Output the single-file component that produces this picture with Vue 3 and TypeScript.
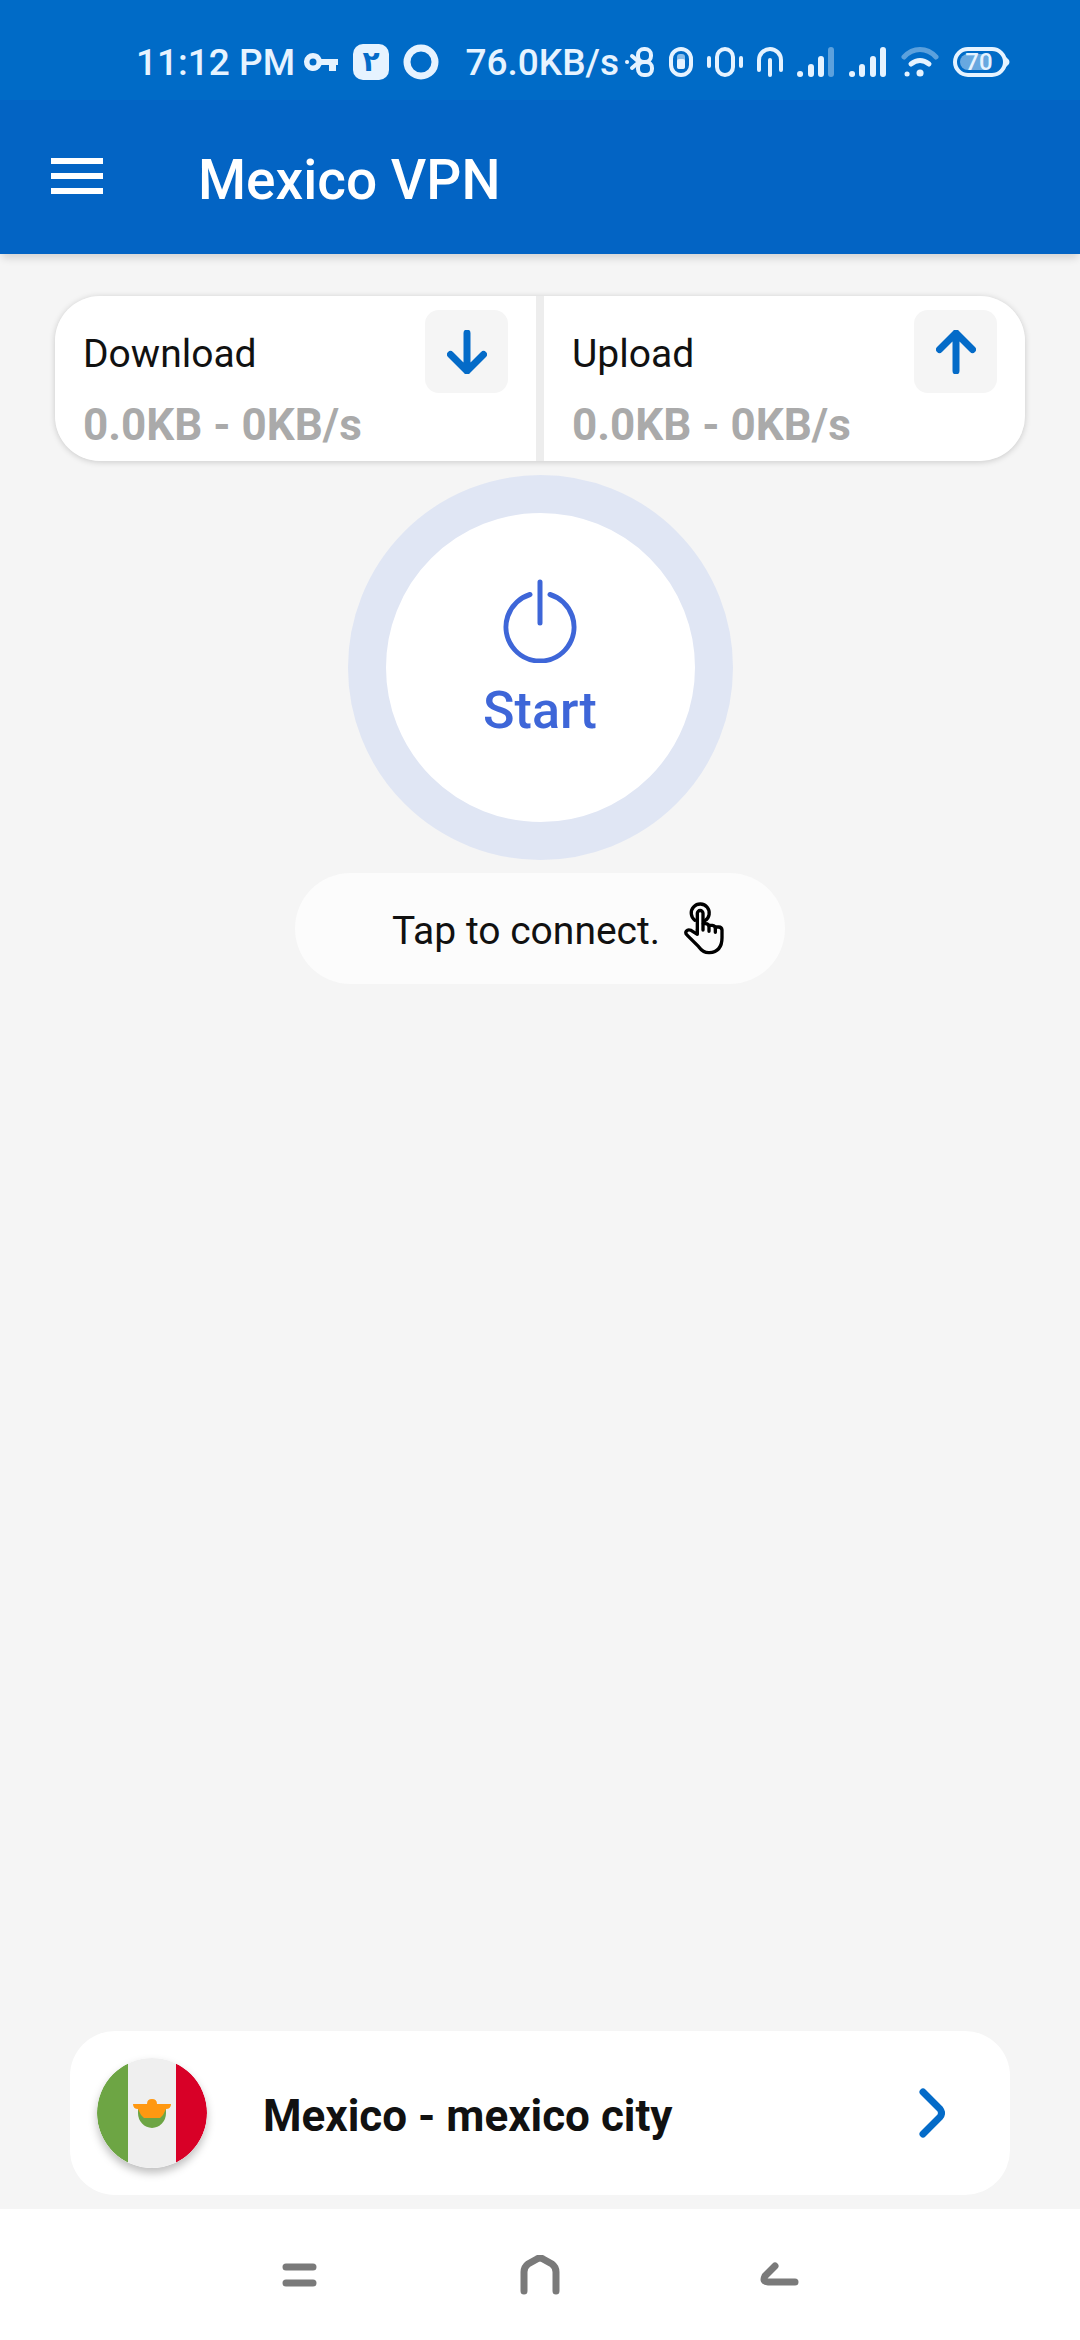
<script setup lang="ts">
import { ref } from 'vue'

interface Traffic {
  label: string
  value: string
  arrow: string
}

const traffic = ref<Traffic[]>([
  { label: 'Download', value: '0.0KB - 0KB/s', arrow: 'M20 3V41M3.5 24.5L20 41L36.5 24.5' },
  { label: 'Upload', value: '0.0KB - 0KB/s', arrow: 'M20 41V3M3.5 19.5L20 3L36.5 19.5' },
])

const location = ref('Mexico - mexico city')
</script>

<template>
  <div class="screen">
    <div class="status">
      <span class="status-text clock">11:12 PM</span>
      <svg width="35" height="20" viewBox="0 0 35 20" fill="currentColor">
        <path fill-rule="evenodd" d="M9 1a9 9 0 0 1 8.500 6H34v6h-2v6h-7v-6h-7.500A9 9 0 1 1 9 1zM9 6.500a3.500 3.500 0 1 0 0 7a3.500 3.500 0 1 0 0-7z" />
      </svg>
      <span class="badge">٢</span>
      <svg width="36" height="36" viewBox="0 0 36 36" fill="none" stroke="currentColor" stroke-width="7">
        <circle cx="18" cy="18" r="14" />
      </svg>
      <span class="status-text speed">76.0KB/s</span>
      <svg width="30" height="32" viewBox="0 0 30 32" fill="none" stroke="currentColor" stroke-width="4" stroke-linecap="round">
        <path d="M7 10L14 16M7 22L14 16" />
        <rect x="13" y="3" width="13" height="13" rx="6" />
        <rect x="13" y="16" width="14" height="13" rx="6" />
        <path d="M2 16h.1" />
      </svg>
      <svg width="24" height="32" viewBox="0 0 24 32" fill="none">
        <rect x="2" y="3" width="20" height="26" rx="10" stroke="currentColor" stroke-width="4" />
        <rect x="8" y="8" width="8" height="15" rx="3" fill="currentColor" opacity=".6" />
        <rect x="8" y="13" width="8" height="10" rx="2" fill="currentColor" />
      </svg>
      <svg width="36" height="32" viewBox="0 0 36 32" fill="none" stroke="currentColor" stroke-width="4" stroke-linecap="round">
        <rect x="10" y="3" width="16" height="26" rx="8" />
        <path d="M2 12v8M34 12v8" />
      </svg>
      <svg width="26" height="32" viewBox="0 0 26 32" fill="none" stroke="currentColor" stroke-width="4" stroke-linecap="round">
        <path d="M2 24V14a11 11 0 0 1 22 0v10M13 14v15" />
      </svg>
      <svg width="38" height="32" viewBox="0 0 38 32" fill="none" stroke="currentColor" stroke-width="6" stroke-linecap="round">
        <path d="M3 28h.1M14 21v7M24 13v15" />
        <path d="M34 4v24" opacity=".4" />
      </svg>
      <svg width="38" height="32" viewBox="0 0 38 32" fill="none" stroke="currentColor" stroke-width="6" stroke-linecap="round">
        <path d="M3 28h.1M13 21v7M24 13v15M34 4v24" />
      </svg>
      <svg width="38" height="32" viewBox="0 0 38 32" fill="none" stroke="currentColor" stroke-width="5" stroke-linecap="round">
        <path d="M3 11C12 1 26 1 35 11" opacity=".4" />
        <path d="M10 18q9-7 18 0" />
        <path d="M19 27h.1" stroke-width="7" />
        <path d="M6 28h.1" />
      </svg>
      <span class="battery">
        <svg width="57" height="32" viewBox="0 0 57 32" fill="none">
          <rect x="2" y="3" width="50" height="26" rx="13" stroke="currentColor" stroke-width="4" />
          <rect x="7" y="8" width="30" height="16" rx="8" fill="currentColor" opacity=".45" />
          <path d="M53 11l3 3q1 2 0 4l-3 3z" fill="currentColor" />
        </svg>
        <span class="level">70</span>
      </span>
    </div>

    <header class="bar">
      <button class="menu" type="button" aria-label="Menu">
        <svg width="52" height="36" viewBox="0 0 52 36" stroke="#fff" stroke-width="6">
          <path d="M0 3h52M0 18h52M0 33h52" />
        </svg>
      </button>
      <h1>Mexico VPN</h1>
    </header>

    <main>
      <section class="stats">
        <div v-for="item in traffic" :key="item.label" class="stat">
          <div class="stat-head">
            <span class="stat-label">{{ item.label }}</span>
            <span class="stat-icon">
              <svg width="40" height="44" viewBox="0 0 40 44" fill="none" stroke="#046bc8" stroke-width="7" stroke-linecap="round" stroke-linejoin="round">
                <path :d="item.arrow" />
              </svg>
            </span>
          </div>
          <div class="stat-value">{{ item.value }}</div>
        </div>
      </section>

      <button class="power" type="button">
        <svg width="74" height="84" viewBox="0 0 74 84" fill="none" stroke="#3e66d8" stroke-width="5" stroke-linecap="round">
          <path d="M37 3v41M27 15.500A34 34 0 1 0 47 15.500" />
        </svg>
        <span>Start</span>
      </button>

      <p class="hint">
        <span>Tap to connect.</span>
        <svg width="40" height="53" viewBox="36 36 120 159" fill="none" stroke="#000" stroke-width="10" stroke-linecap="round" stroke-linejoin="round">
          <path d="M69 91A27 27 0 1 1 99 92" />
          <path d="M76 120V70a8 8 0 0 1 17 0V120" />
          <path d="M76 120V133L57 121C45 116 36 127 46 136L80 170Q94 189 112 188C138 186 150 169 150 143V120Q149 110 138 111H131" />
          <path d="M94 101h6q11 0 11 10v13M112 106h9q9 1 9 10v11" />
        </svg>
      </p>

      <button class="location" type="button">
        <svg class="flag" width="110" height="110" viewBox="0 0 110 110">
          <defs>
            <clipPath id="disc"><circle cx="55" cy="55" r="55" /></clipPath>
          </defs>
          <g clip-path="url(#disc)">
            <path d="M0 0h110v110H0z" fill="#efefef" />
            <path d="M0 0h31v110H0z" fill="#6da544" />
            <path d="M79 0h31v110H79z" fill="#d80027" />
            <path d="M41 50h28v5a14 15 0 0 1-28 0z" fill="#6da544" />
            <path d="M36 46h14q0-5 5-5t5 5h14q0 5-5 5l-3 6-3 3H47l-3-3-3-6q-5 0-5-5z" fill="#ff9811" />
          </g>
        </svg>
        <span class="place">{{ location }}</span>
        <svg width="26" height="50" viewBox="0 0 26 50" fill="none" stroke="#046bc8" stroke-width="7" stroke-linecap="round">
          <path d="M4 4L21 21Q24 25 21 29L4 46" />
        </svg>
      </button>
    </main>

    <nav class="nav">
      <button type="button" aria-label="Recent apps">
        <svg width="40" height="40" viewBox="0 0 40 40">
          <path d="M6 12h27M6 28h27" />
        </svg>
      </button>
      <button type="button" aria-label="Home">
        <svg width="40" height="40" viewBox="0 0 40 40">
          <path d="M4 36V17Q4 12 8 9L17 4Q20 2 23 4L32 9Q36 12 36 17V36" />
        </svg>
      </button>
      <button type="button" aria-label="Back">
        <svg width="40" height="40" viewBox="0 0 40 40">
          <path d="M15 11L5 21Q2 27 8 27H35" />
        </svg>
      </button>
    </nav>
  </div>
</template>

<style>
body {
  background: #f5f5f5;
}
</style>

<style scoped>
* {
  box-sizing: border-box;
}

.screen {
  display: flex;
  flex-direction: column;
  min-height: 100vh;
  font-family: Roboto, "Noto Sans", sans-serif;
  color: #111;
  background: #f5f5f5;
}

svg {
  display: block;
  flex: none;
}

button {
  border: 0;
  padding: 0;
  background: none;
  font: inherit;
  color: inherit;
}

.status {
  display: flex;
  align-items: center;
  gap: 14px;
  height: 100px;
  padding: 24px 70px 0 136px;
  background: #006bc7;
  color: #e6f3ff;
}

.status-text {
  padding-top: 2px;
  font-size: 37px;
  font-weight: 500;
  line-height: 44px;
  white-space: nowrap;
}

.clock {
  flex: none;
  margin-right: -5px;
}

.speed {
  margin-left: auto;
  margin-right: -8px;
}

.badge {
  display: flex;
  flex: none;
  align-items: center;
  justify-content: center;
  width: 36px;
  height: 36px;
  border-radius: 10px;
  background: #e6f3ff;
  color: #046bc8;
  font: bold 28px/36px "DejaVu Sans", sans-serif;
}

.battery {
  position: relative;
  flex: none;
}

.level {
  position: absolute;
  inset: 0 5px 0 0;
  font-size: 24px;
  font-weight: 500;
  line-height: 32px;
  text-align: center;
}

.bar {
  display: flex;
  align-items: center;
  gap: 95px;
  height: 154px;
  padding: 0 51px 2px;
  background: #0364c4;
  box-shadow: 0 6px 8px -2px rgba(0, 0, 0, 0.14);
}

h1 {
  margin: 0;
  padding-top: 8px;
  color: #fff;
  font-size: 55px;
  font-weight: 500;
  line-height: 64px;
}

main {
  display: flex;
  flex: 1;
  flex-direction: column;
  align-items: center;
  padding: 42px 55px 14px;
}

.stats {
  display: flex;
  gap: 8px;
  width: 100%;
  border-radius: 45px;
  background: #ededed;
  box-shadow: 0 1px 6px rgba(0, 0, 0, 0.18);
  overflow: hidden;
}

.stat {
  flex: 1;
  padding: 14px 28px 10px;
  background: #fff;
}

.stat-head {
  display: flex;
  align-items: center;
  justify-content: space-between;
}

.stat-label {
  padding-top: 4px;
  font-size: 39px;
  line-height: 44px;
}

.stat-icon {
  display: flex;
  align-items: center;
  justify-content: center;
  width: 83px;
  height: 83px;
  border-radius: 14px;
  background: #f5f5f5;
}

.stat-value {
  margin-top: 6px;
  color: #aaa;
  font-size: 44px;
  font-weight: 700;
  line-height: 52px;
}

.power {
  display: flex;
  flex-direction: column;
  align-items: center;
  gap: 20px;
  width: 385px;
  height: 385px;
  margin-top: 14px;
  padding-top: 66px;
  border: 38px solid #e0e6f4;
  border-radius: 50%;
  background: #fff;
  color: #3e66d8;
  font-size: 52px;
  font-weight: 500;
  line-height: 56px;
}

.hint {
  display: flex;
  align-items: center;
  gap: 24px;
  width: 490px;
  height: 111px;
  margin: 13px 0 0;
  padding-left: 97px;
  border-radius: 56px;
  background: #fcfcfc;
  font-size: 39px;
  line-height: 44px;
}

.hint span {
  padding-top: 4px;
}

.location {
  display: flex;
  align-items: center;
  align-self: stretch;
  height: 164px;
  margin: auto 15px 0;
  padding: 0 65px 0 27px;
  border-radius: 45px;
  background: #fff;
}

.flag {
  border-radius: 50%;
  box-shadow: 0 5px 8px rgba(0, 0, 0, 0.25);
}

.place {
  flex: 1;
  padding: 6px 0 0 56px;
  font-size: 44px;
  font-weight: 700;
  line-height: 52px;
  text-align: left;
}

.nav {
  display: flex;
  justify-content: center;
  height: 131px;
  background: #fff;
}

.nav button {
  display: flex;
  align-items: center;
  justify-content: center;
  width: 240px;
}

.nav svg {
  fill: none;
  stroke: #7a7a7a;
  stroke-width: 7;
  stroke-linecap: round;
  stroke-linejoin: round;
}
</style>
